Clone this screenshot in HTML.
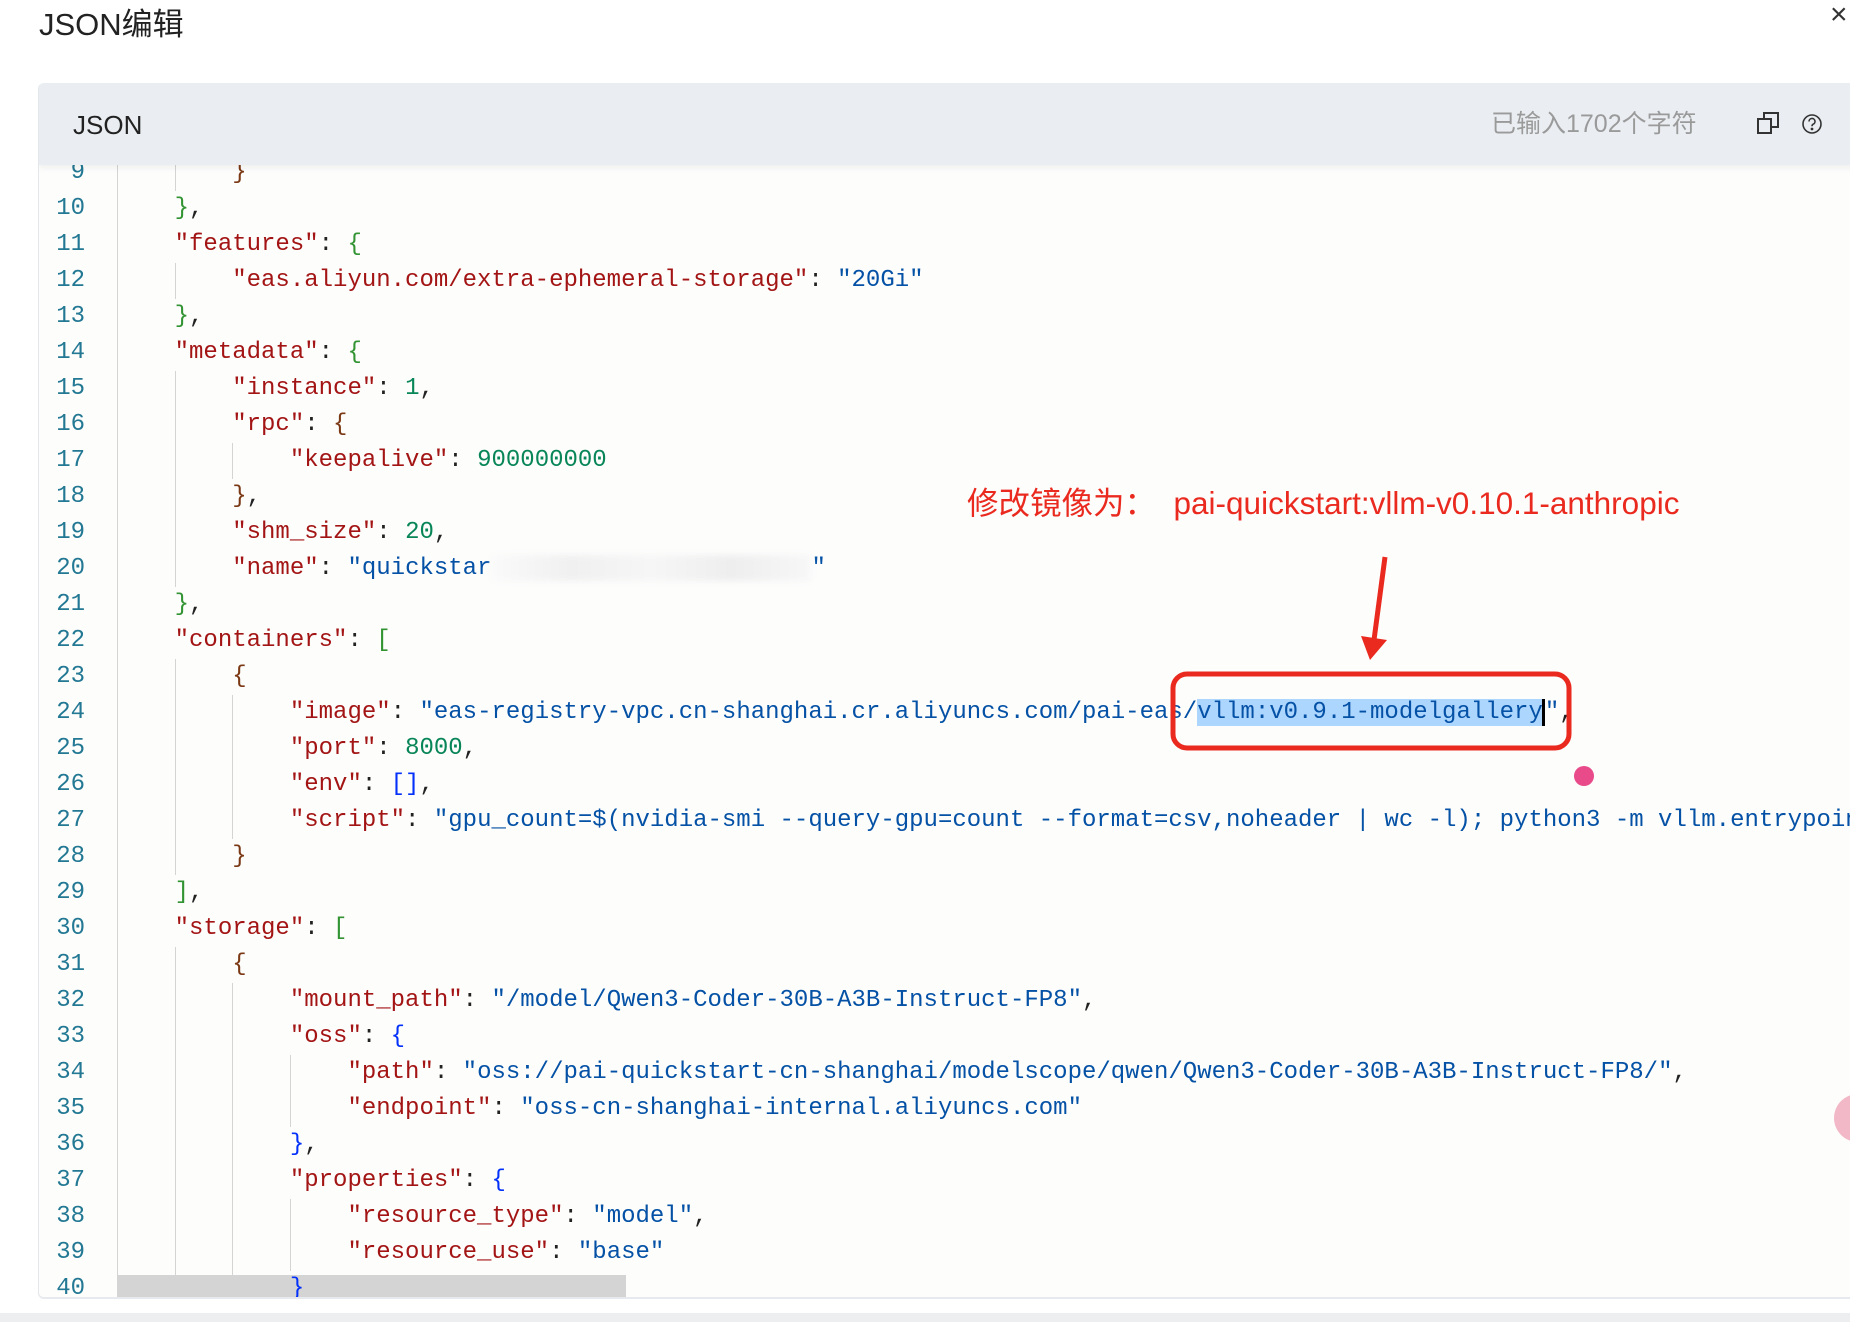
<!DOCTYPE html>
<html><head><meta charset="utf-8"><style>
html,body{margin:0;padding:0;width:1850px;height:1322px;overflow:hidden;background:#fff;position:relative;font-family:"Liberation Sans","Noto Sans CJK SC",sans-serif}
.title{position:absolute;left:39px;top:5px;font-size:31px;color:#222;line-height:40px}
.close{position:absolute;left:1830px;top:0px;font-size:30px;color:#333;line-height:30px}
.card{position:absolute;left:38px;top:83px;width:1830px;height:1214px;background:#fdfdfc;border-left:1px solid #e3e6ea;border-bottom:2px solid #e6e9ed;border-radius:6px 0 0 6px;overflow:hidden}
.hdr{position:absolute;left:0;top:0;width:100%;height:82px;background:#eaeef2;z-index:5;box-shadow:0 3px 6px rgba(0,0,0,0.06)}
.hdr .lbl{position:absolute;left:34px;top:24px;font-size:26px;color:#222;line-height:36px}
.hdr .cnt{position:absolute;left:1452px;top:23px;font-size:25px;color:#9a9a9a;line-height:36px}
.code{position:absolute;left:0;top:0;width:100%;height:100%;font-family:"Liberation Mono",monospace;font-size:24px}
.ln{position:absolute;left:0;height:36px;line-height:36px;width:100%;white-space:pre}
.num{position:absolute;left:0;width:46px;text-align:right;color:#237893}
.txt{position:absolute;left:78px}
.g{position:absolute;top:0;width:1px;height:36px;background:#d4d4d4}
.k{color:#a31515}.s{color:#0451a5}.n{color:#098658}.p{color:#222}
.b1{color:#319331}.b2{color:#7b3814}.b3{color:#0431fa}
.bottom{position:absolute;left:0;top:1313px;width:1850px;height:9px;background:#eceef0}
</style></head><body>
<div class="title">JSON编辑</div>
<div class="close">×</div>
<div class="card">
 <div class="hdr">
  <div class="lbl">JSON</div>
  <div class="cnt">已输入1702个字符</div>
  <svg style="position:absolute;left:1717px;top:28px" width="24" height="24" viewBox="0 0 24 24" fill="none" stroke="#333" stroke-width="2"><rect x="2" y="8" width="13" height="14"/><path d="M8 8V2h14v14h-7"/></svg>
  <svg style="position:absolute;left:1762px;top:30px" width="22" height="22" viewBox="0 0 22 22" fill="none" stroke="#333" stroke-width="1.6"><circle cx="11" cy="11" r="9"/><path d="M8 8.5a3 3 0 1 1 4 2.8c-.8.4-1 1-1 2"/><circle cx="11" cy="16" r=".6" fill="#333"/></svg>
 </div>
 <div class="code" id="code"></div>
</div>
<div class="bottom"></div>

<div style="position:absolute;left:967px;top:483px;font-size:31.5px;color:#ea2a1f;line-height:40px;white-space:nowrap">修改镜像为：&nbsp;&nbsp;pai-quickstart:vllm-v0.10.1-anthropic</div>
<svg style="position:absolute;left:0;top:0" width="1850" height="1322">
 <line x1="1385" y1="557" x2="1374" y2="640" stroke="#ea2a1f" stroke-width="5"/>
 <polygon points="1361,636 1387,640 1370,660" fill="#ea2a1f"/>
 <rect x="1173" y="674" width="396" height="74" rx="14" fill="none" stroke="#ea2a1f" stroke-width="5"/>
 <circle cx="1584" cy="776" r="10" fill="#e84a8a"/>
 <circle cx="1858" cy="1118" r="24" fill="#f3b8c8"/>
</svg>

<script>
var L=[
[9,2,'<span class="b2">}</span>'],
[10,1,'<span class="b1">}</span>,'],
[11,1,'<span class="k">"features"</span>: <span class="b1">{</span>'],
[12,2,'<span class="k">"eas.aliyun.com/extra-ephemeral-storage"</span>: <span class="s">"20Gi"</span>'],
[13,1,'<span class="b1">}</span>,'],
[14,1,'<span class="k">"metadata"</span>: <span class="b1">{</span>'],
[15,2,'<span class="k">"instance"</span>: <span class="n">1</span>,'],
[16,2,'<span class="k">"rpc"</span>: <span class="b2">{</span>'],
[17,3,'<span class="k">"keepalive"</span>: <span class="n">900000000</span>'],
[18,2,'<span class="b2">}</span>,'],
[19,2,'<span class="k">"shm_size"</span>: <span class="n">20</span>,'],
[20,2,'<span class="k">"name"</span>: <span class="s">"quickstar<span style="display:inline-block;width:320px;height:26px;vertical-align:middle;background:linear-gradient(90deg,#fafafa,#f0f0f0,#f6f6f6,#eeeeee,#f7f7f7);filter:blur(3px)"></span>"</span>'],
[21,1,'<span class="b1">}</span>,'],
[22,1,'<span class="k">"containers"</span>: <span class="b1">[</span>'],
[23,2,'<span class="b2">{</span>'],
[24,3,'<span class="k">"image"</span>: <span class="s">"eas-registry-vpc.cn-shanghai.cr.aliyuncs.com/pai-eas/<span style="background:#add6ff">vllm:v0.9.1-modelgallery</span><span style="border-left:3px solid #000;margin-left:-1px"></span>"</span>,'],
[25,3,'<span class="k">"port"</span>: <span class="n">8000</span>,'],
[26,3,'<span class="k">"env"</span>: <span class="b3">[]</span>,'],
[27,3,'<span class="k">"script"</span>: <span class="s">"gpu_count=$(nvidia-smi --query-gpu=count --format=csv,noheader | wc -l); python3 -m vllm.entrypoints.openai.api_server"</span>'],
[28,2,'<span class="b2">}</span>'],
[29,1,'<span class="b1">]</span>,'],
[30,1,'<span class="k">"storage"</span>: <span class="b1">[</span>'],
[31,2,'<span class="b2">{</span>'],
[32,3,'<span class="k">"mount_path"</span>: <span class="s">"/model/Qwen3-Coder-30B-A3B-Instruct-FP8"</span>,'],
[33,3,'<span class="k">"oss"</span>: <span class="b3">{</span>'],
[34,4,'<span class="k">"path"</span>: <span class="s">"oss://pai-quickstart-cn-shanghai/modelscope/qwen/Qwen3-Coder-30B-A3B-Instruct-FP8/"</span>,'],
[35,4,'<span class="k">"endpoint"</span>: <span class="s">"oss-cn-shanghai-internal.aliyuncs.com"</span>'],
[36,3,'<span class="b3">}</span>,'],
[37,3,'<span class="k">"properties"</span>: <span class="b3">{</span>'],
[38,4,'<span class="k">"resource_type"</span>: <span class="s">"model"</span>,'],
[39,4,'<span class="k">"resource_use"</span>: <span class="s">"base"</span>'],
[40,3,'<span class="b3">}</span>']
];
var h='';
L.forEach(function(r){
 var top=209+(r[0]-10)*36-18-83;
 var bg=r[0]==40?'<div style="position:absolute;left:79px;top:4px;width:508px;height:32px;background:#d4d4d4"></div>':'';
 var g='';
 for(var k=0;k<r[1];k++){g+='<div class="g" style="left:'+(78+57.6*k)+'px"></div>';}
 h+='<div class="ln" style="top:'+top+'px">'+bg+g+'<span class="num">'+r[0]+'</span><span class="txt">'+'    '.repeat(r[1])+'<span class="p">'+r[2]+'</span></span></div>';
});
document.getElementById('code').innerHTML=h;
</script>
</body></html>
